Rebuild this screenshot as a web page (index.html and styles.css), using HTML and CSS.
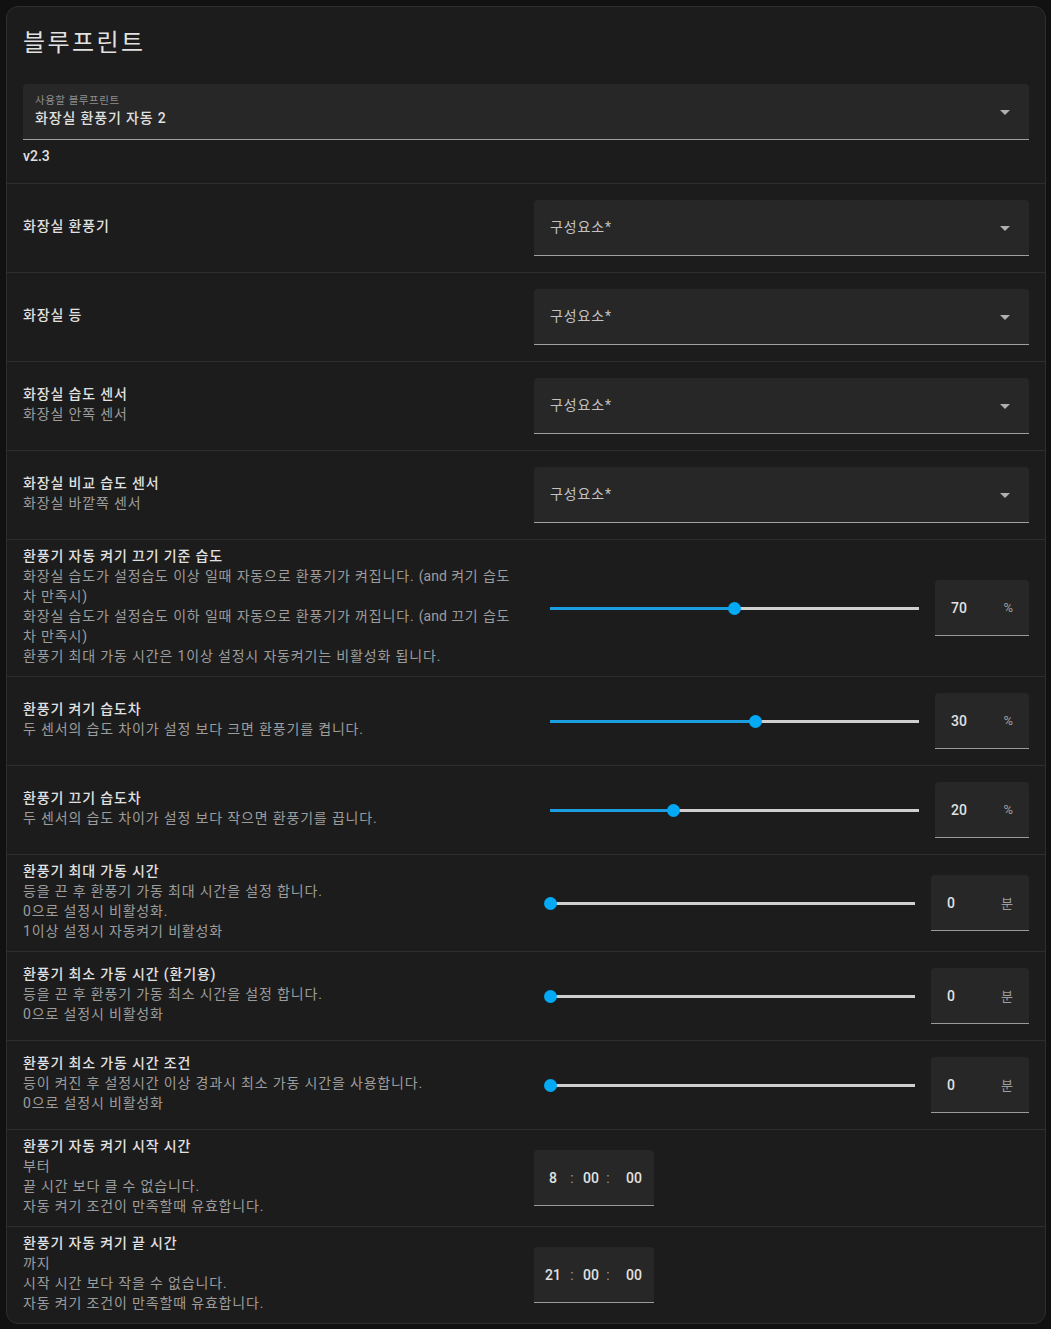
FILE: index.html
```html
<!DOCTYPE html>
<html lang="ko">
<head>
<meta charset="utf-8">
<title>블루프린트</title>
<link rel="stylesheet" href="styles.css">
</head>
<body>
<div class="card">
  <div class="card-header">블루프린트</div>
  <div class="card-top">
    <div class="select select-filled">
      <div class="sel-label">사용할 블루프린트</div>
      <div class="sel-value">화장실 환풍기 자동 2</div>
      <span class="arrow"></span>
    </div>
    <div class="version">v2.3</div>
  </div>

  <div class="row">
    <div class="info"><div class="name">화장실 환풍기</div></div>
    <div class="ctrl"><div class="select select-row"><span class="ph">구성요소*</span><span class="arrow"></span></div></div>
  </div>

  <div class="row">
    <div class="info"><div class="name">화장실 등</div></div>
    <div class="ctrl"><div class="select select-row"><span class="ph">구성요소*</span><span class="arrow"></span></div></div>
  </div>

  <div class="row">
    <div class="info"><div class="name">화장실 습도 센서</div><div class="desc">화장실 안쪽 센서</div></div>
    <div class="ctrl"><div class="select select-row"><span class="ph">구성요소*</span><span class="arrow"></span></div></div>
  </div>

  <div class="row">
    <div class="info"><div class="name">화장실 비교 습도 센서</div><div class="desc">화장실 바깥쪽 센서</div></div>
    <div class="ctrl"><div class="select select-row"><span class="ph">구성요소*</span><span class="arrow"></span></div></div>
  </div>

  <div class="row">
    <div class="info">
      <div class="name">환풍기 자동 켜기 끄기 기준 습도</div>
      <div class="desc">화장실 습도가 설정습도 이상 일때 자동으로 환풍기가 켜집니다. <span class="latin">(and</span> 켜기 습도 차 만족시)<br>화장실 습도가 설정습도 이하 일때 자동으로 환풍기가 꺼집니다. <span class="latin">(and</span> 끄기 습도 차 만족시)<br>환풍기 최대 가동 시간은 1이상 설정시 자동켜기는 비활성화 됩니다.</div>
    </div>
    <div class="ctrl">
      <div class="slider"><div class="track"><div class="fill" style="width:50%"></div><div class="thumb" style="left:50%"></div></div></div>
      <div class="num"><span class="val">70</span><span class="unit">%</span></div>
    </div>
  </div>

  <div class="row">
    <div class="info"><div class="name">환풍기 켜기 습도차</div><div class="desc">두 센서의 습도 차이가 설정 보다 크면 환풍기를 켭니다.</div></div>
    <div class="ctrl">
      <div class="slider"><div class="track"><div class="fill" style="width:55.7%"></div><div class="thumb" style="left:55.7%"></div></div></div>
      <div class="num"><span class="val">30</span><span class="unit">%</span></div>
    </div>
  </div>

  <div class="row">
    <div class="info"><div class="name">환풍기 끄기 습도차</div><div class="desc">두 센서의 습도 차이가 설정 보다 작으면 환풍기를 끕니다.</div></div>
    <div class="ctrl">
      <div class="slider"><div class="track"><div class="fill" style="width:33.4%"></div><div class="thumb" style="left:33.4%"></div></div></div>
      <div class="num"><span class="val">20</span><span class="unit">%</span></div>
    </div>
  </div>

  <div class="row">
    <div class="info"><div class="name">환풍기 최대 가동 시간</div><div class="desc">등을 끈 후 환풍기 가동 최대 시간을 설정 합니다.<br>0으로 설정시 비활성화.<br>1이상 설정시 자동켜기 비활성화</div></div>
    <div class="ctrl">
      <div class="slider"><div class="track"><div class="fill" style="width:0%"></div><div class="thumb" style="left:0%"></div></div></div>
      <div class="num num-min"><span class="val">0</span><span class="unit">분</span></div>
    </div>
  </div>

  <div class="row">
    <div class="info"><div class="name">환풍기 최소 가동 시간 (환기용)</div><div class="desc">등을 끈 후 환풍기 가동 최소 시간을 설정 합니다.<br>0으로 설정시 비활성화</div></div>
    <div class="ctrl">
      <div class="slider"><div class="track"><div class="fill" style="width:0%"></div><div class="thumb" style="left:0%"></div></div></div>
      <div class="num num-min"><span class="val">0</span><span class="unit">분</span></div>
    </div>
  </div>

  <div class="row">
    <div class="info"><div class="name">환풍기 최소 가동 시간 조건</div><div class="desc">등이 켜진 후 설정시간 이상 경과시 최소 가동 시간을 사용합니다.<br>0으로 설정시 비활성화</div></div>
    <div class="ctrl">
      <div class="slider"><div class="track"><div class="fill" style="width:0%"></div><div class="thumb" style="left:0%"></div></div></div>
      <div class="num num-min"><span class="val">0</span><span class="unit">분</span></div>
    </div>
  </div>

  <div class="row">
    <div class="info"><div class="name">환풍기 자동 켜기 시작 시간</div><div class="desc">부터<br>끝 시간 보다 클 수 없습니다.<br>자동 켜기 조건이 만족할때 유효합니다.</div></div>
    <div class="ctrl">
      <div class="time"><span class="f f1">8</span><span class="c c1">:</span><span class="f f2">00</span><span class="c c2">:</span><span class="f f3">00</span></div>
    </div>
  </div>

  <div class="row">
    <div class="info"><div class="name">환풍기 자동 켜기 끝 시간</div><div class="desc">까지<br>시작 시간 보다 작을 수 없습니다.<br>자동 켜기 조건이 만족할때 유효합니다.</div></div>
    <div class="ctrl">
      <div class="time"><span class="f f1">21</span><span class="c c1">:</span><span class="f f2">00</span><span class="c c2">:</span><span class="f f3">00</span></div>
    </div>
  </div>
</div>
</body>
</html>
```
FILE: styles.css
```css
* { box-sizing: border-box; }
html, body { margin: 0; padding: 0; background: #111111; }
body {
  padding: 6px;
  font-family: Roboto, "Noto Sans CJK KR", sans-serif;
  color: #e1e1e1;
  font-size: 14px;
}
.card {
  width: 1040px;
  background: #1c1c1c;
  border: 1px solid #2e2e2e;
  border-radius: 12px;
  overflow: hidden;
  letter-spacing: 0.06em;
  word-break: keep-all;
}
.card-header {
  padding: 14px 16px 19px;
  font-size: 24px;
  line-height: 44px;
  color: #e1e1e1;
  letter-spacing: 0.1em;
}
.card-top { padding: 0 16px 17px; }
.select {
  position: relative;
  height: 56px;
  background: #272727;
  border-radius: 4px 4px 0 0;
  border-bottom: 1px solid #a0a0a0;
}
.select-filled { padding: 11px 12px 0; }
.sel-label { font-size: 10.5px; line-height: 12px; color: #8f8f8f; letter-spacing: 0.05em; }
.sel-value { font-size: 14px; line-height: 22px; color: #e1e1e1; font-weight: 500; }
.select-row { flex: 1; display: flex; align-items: center; padding: 0 16px; }
.ph { color: #c2c2c2; font-size: 14px; line-height: 20px; margin-top: -2px; }
.arrow {
  position: absolute;
  right: 19px;
  top: 50%;
  margin-top: -2px;
  width: 0; height: 0;
  border-left: 5px solid transparent;
  border-right: 5px solid transparent;
  border-top: 5px solid #b0b0b0;
}
.version { padding-top: 6px; line-height: 20px; font-size: 14px; font-weight: 500; color: #e1e1e1; letter-spacing: 0; }
.row {
  display: flex;
  align-items: center;
  gap: 16px;
  min-height: 89px;
  padding: 8px 16px;
  border-top: 1px solid #2e2e2e;
}
.info { flex: 1 1 0; min-width: 0; margin-top: -2px; margin-bottom: 2px; }
.name { font-size: 14px; line-height: 20px; font-weight: 500; color: #e1e1e1; }
.desc { font-size: 14px; line-height: 20px; color: #9c9c9c; }
.latin { letter-spacing: 0; }
.ctrl { flex: 1 1 0; min-width: 0; display: flex; align-items: center; }
.slider { flex: 1; height: 56px; padding: 0 16px; display: flex; align-items: center; }
.track { position: relative; flex: 1; height: 3px; background: #cfcfcf; }
.fill { height: 100%; background: #1c9fe0; }
.thumb {
  position: absolute;
  top: 50%;
  width: 13px; height: 13px;
  margin-left: -6.5px;
  margin-top: -6.5px;
  border-radius: 50%;
  background: #03a9f4;
}
.num {
  width: 94px;
  height: 56px;
  padding: 0 16px;
  display: flex;
  align-items: center;
  justify-content: space-between;
  background: #272727;
  border-radius: 4px 4px 0 0;
  border-bottom: 1px solid #9a9a9a;
  letter-spacing: 0;
}
.num-min { width: 98px; }
.val { font-size: 14px; font-weight: 500; color: #e1e1e1; }
.unit { font-size: 13px; color: #9e9e9e; }
.time {
  width: 120px;
  height: 56px;
  display: flex;
  align-items: center;
  background: #272727;
  border-radius: 4px 4px 0 0;
  border-bottom: 1px solid #9a9a9a;
  padding-left: 6px;
  letter-spacing: 0;
}
.f { text-align: center; font-size: 14px; font-weight: 500; color: #e1e1e1; }
.c { text-align: center; font-size: 14px; color: #9e9e9e; }
.f1 { width: 26px; }
.c1 { width: 12px; }
.f2 { width: 26px; }
.c2 { width: 8px; }
.f3 { width: 24px; margin-left: 10px; }
```
